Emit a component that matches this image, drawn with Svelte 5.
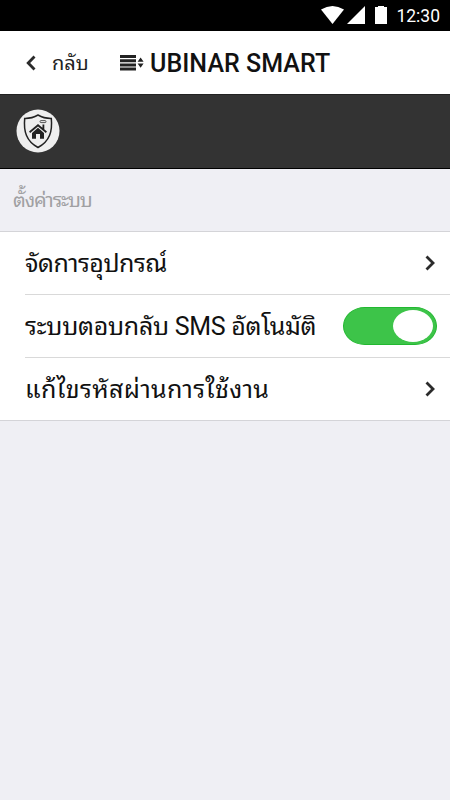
<script lang="ts">
    let autoReply = $state(true);
</script>

{#snippet chevron()}
    <svg class="chevron" viewBox="0 0 10 16" width="10" height="16">
        <path d="M1.5 1.5 8 8l-6.5 6.5" />
    </svg>
{/snippet}

<div class="screen">
    <div class="status">
        <svg viewBox="0 0 68 20" width="68" height="20">
            <path d="M0 3.6Q11.5-3.6 23 3.6L11.5 18z" />
            <path d="M26 18 44 0v18z" />
            <path d="M54 1h3V0h6v1h3v17H54z" />
        </svg>
        <span class="time">12:30</span>
    </div>

    <header class="navbar">
        <button type="button" class="back">
            <svg viewBox="0 0 10 16" width="10" height="16">
                <path d="M8.5 1.5 2.2 8l6.3 6.5" />
            </svg>
            <span>กลับ</span>
        </button>
        <svg class="reorder" viewBox="0 0 24 16" width="24" height="16">
            <path d="M0 0h16v3H0zM0 4.2h16v3H0zM0 8.4h16v3H0zM0 12.6h16v3H0z" />
            <path d="M17.6 6.8h6L20.6 2.6zM17.6 8.6h6l-3 4.2z" />
        </svg>
        <h1>UBINAR SMART</h1>
    </header>

    <div class="banner">
        <svg class="logo" viewBox="0 0 44 44" width="44" height="44">
            <circle cx="22" cy="22" r="21.5" fill="#eee" />
            <path class="shield" d="M22 6Q28 9.5 35.3 9.4C36.5 22 34 32 22 38.5 10 32 7.5 22 8.7 9.4 16 9.5 22 6 22 6z" />
            <path class="roof" d="M13.6 23.2 22 16.2l8.4 7M27.4 20.5v-5" />
            <path d="M16 24 22 18.8l6 5.2v5.7h-4v-4.8h-4v4.8h-4z" fill="#222" />
            <rect class="smoke" x="24" y="11.6" width="6" height="2" rx="1" />
        </svg>
    </div>

    <h2>ตั้งค่าระบบ</h2>

    <div class="list">
        <div class="row">
            <span class="label devices">จัดการอุปกรณ์</span>
            {@render chevron()}
        </div>
        <div class="row">
            <span class="label sms">ระบบตอบกลับ SMS อัตโนมัติ</span>
            <button
                type="button"
                class="toggle"
                class:on={autoReply}
                aria-label="SMS"
                onclick={() => (autoReply = !autoReply)}
            >
                <span class="knob"></span>
            </button>
        </div>
        <div class="row">
            <span class="label password">แก้ไขรหัสผ่านการใช้งาน</span>
            {@render chevron()}
        </div>
    </div>
</div>

<style>
    :global(body) {
        background: #efeff4;
    }

    .screen {
        min-height: 800px;
        background: #efeff4;
        color: #111;
        font-family: Roboto, "Noto Sans Thai Looped", "Droid Sans Thai", Loma, Waree, "Noto Sans", sans-serif;
    }

    .status {
        display: flex;
        align-items: center;
        justify-content: flex-end;
        box-sizing: border-box;
        height: 31px;
        padding-right: 10px;
        background: #000;
        color: #fff;
        fill: #fff;
    }

    .time {
        margin-left: 7px;
        font-size: 17.5px;
    }

    .navbar {
        display: flex;
        align-items: center;
        height: 63px;
        background: #fff;
    }

    .back {
        display: flex;
        align-items: center;
        padding: 0;
        margin-left: 26px;
        width: 94px;
        border: none;
        background: none;
        color: #222;
        font: inherit;
        font-size: 20px;
    }

    .back span {
        margin-left: 16px;
        padding-bottom: 3px;
    }

    .back path,
    .chevron path {
        fill: none;
        stroke: #2b2b2b;
        stroke-width: 2.8;
    }

    .chevron {
        margin-right: 2px;
    }

    .reorder {
        fill: #222;
    }

    h1 {
        margin: 0 0 0 6px;
        padding-top: 2px;
        font-size: 25px;
        font-weight: 500;
        letter-spacing: 0.05px;
        white-space: nowrap;
    }

    .banner {
        display: flex;
        align-items: center;
        box-sizing: border-box;
        height: 75px;
        padding: 0 0 1px 15.5px;
        border-top: 1px solid #222;
        border-bottom: 1px solid #000;
        background: #333;
    }

    .shield,
    .roof,
    .smoke {
        fill: none;
        stroke: #222;
        stroke-width: 1.5;
    }

    .roof {
        stroke-width: 1.8;
    }

    .smoke {
        stroke: #555;
        stroke-width: 1;
    }

    h2 {
        display: flex;
        align-items: center;
        box-sizing: border-box;
        height: 62px;
        margin: 0;
        padding: 0 0 5px 13px;
        color: #a0a0a2;
        font-size: 20px;
        font-weight: 400;
        letter-spacing: -1.1px;
    }

    .list {
        border-top: 1px solid #d4d4d8;
        border-bottom: 1px solid #d4d4d8;
        background: #fff;
    }

    .row {
        display: flex;
        align-items: center;
        justify-content: space-between;
        height: 62px;
        margin-left: 25px;
        padding-right: 13px;
    }

    .row + .row {
        border-top: 1px solid #d9d9d9;
    }

    .label {
        padding-bottom: 5px;
        font-size: 25px;
        white-space: nowrap;
    }

    .devices {
        letter-spacing: -0.5px;
    }

    .sms {
        letter-spacing: -0.3px;
    }

    .password {
        letter-spacing: 0.33px;
    }

    .toggle {
        display: flex;
        align-items: center;
        box-sizing: border-box;
        width: 94px;
        height: 38px;
        padding: 0 3px;
        border: 1px solid #bbb;
        border-radius: 22px / 19px;
        background: #ccc;
    }

    .toggle.on {
        justify-content: flex-end;
        border-color: #22b830;
        background: #3dc449;
    }

    .knob {
        width: 40px;
        height: 32px;
        border-radius: 50%;
        background: #fff;
    }
</style>
